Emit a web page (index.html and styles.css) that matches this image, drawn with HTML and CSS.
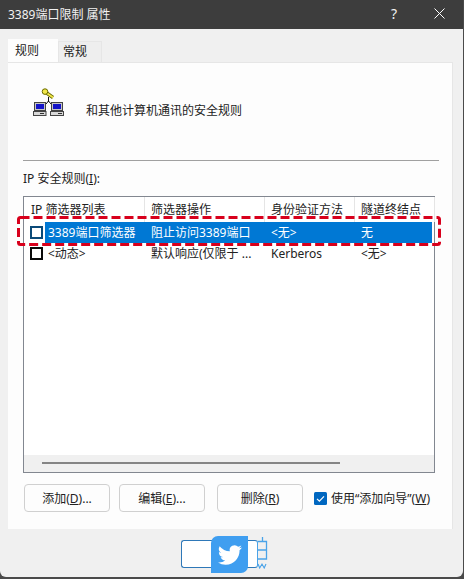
FILE: index.html
```html
<!DOCTYPE html>
<html lang="zh-CN">
<head>
    <meta charset="UTF-8">
    <meta name="viewport" content="width=device-width, initial-scale=1.0">
    <title>3389端口限制 属性</title>
    <link rel="stylesheet" href="styles.css">
</head>
<body>
    <div class="window">
        <!-- Title bar -->
        <div class="titlebar">
            <span class="title">3389端口限制 属性</span>
            <span class="help">?</span>
            <svg class="close" width="11" height="11" viewBox="0 0 11 11" aria-hidden="true">
                <path d="M0.5 0.5L10.5 10.5M10.5 0.5L0.5 10.5" stroke="#fff" stroke-width="1" fill="none"/>
            </svg>
        </div>

        <div class="content">
            <div class="tabs">
                <div class="tab tab-active">规则</div>
                <div class="tab">常规</div>
            </div>

            <div class="panel">
                <div class="intro">
                    <svg class="intro-icon" width="33" height="29" viewBox="0 0 33 29" aria-hidden="true">
                        <!-- link -->
                        <path d="M16.5 9V14M16.5 13L14 16M16.5 13L19 16" stroke="#111" stroke-width="1" fill="none"/>
                        <!-- key -->
                        <path d="M14 4.5L21 9.5" stroke="#6b6b00" stroke-width="3.4" fill="none"/>
                        <path d="M14 4.5L21 9.5" stroke="#f2e84a" stroke-width="1.6" fill="none"/>
                        <circle cx="13" cy="3.6" r="2.8" fill="#f2e84a" stroke="#6b6b00" stroke-width="1"/>
                        <!-- left computer -->
                        <rect x="2.5" y="14.5" width="11" height="8" fill="#c6c6c6" stroke="#444"/>
                        <rect x="4" y="16" width="8" height="5" fill="#1414c8"/>
                        <rect x="1.5" y="23.5" width="12.5" height="4" fill="#d8d8d8" stroke="#444"/>
                        <rect x="8" y="25" width="4" height="1" fill="#333"/>
                        <!-- right computer -->
                        <rect x="19.5" y="14.5" width="11" height="8" fill="#c6c6c6" stroke="#444"/>
                        <rect x="21" y="16" width="8" height="5" fill="#1414c8"/>
                        <rect x="18.5" y="23.5" width="13" height="4" fill="#d8d8d8" stroke="#444"/>
                        <rect x="26" y="25" width="4" height="1" fill="#333"/>
                    </svg>
                    <span class="intro-text">和其他计算机通讯的安全规则</span>
                </div>

                <div class="divider"></div>

                <div class="list-label">IP 安全规则(<u>I</u>):</div>

                <div class="list">
                    <div class="list-head">
                        <div class="col col-filter">IP 筛选器列表</div>
                        <div class="col col-action">筛选器操作</div>
                        <div class="col col-auth">身份验证方法</div>
                        <div class="col col-tunnel">隧道终结点</div>
                    </div>

                    <div class="row row-selected">
                        <span class="check"></span>
                        <div class="row-cells">
                            <div class="col col-name">3389端口筛选器</div>
                            <div class="col col-action">阻止访问3389端口</div>
                            <div class="col col-auth">&lt;无&gt;</div>
                            <div class="col col-tunnel">无</div>
                        </div>
                    </div>
                    <div class="row">
                        <span class="check"></span>
                        <div class="row-cells">
                            <div class="col col-name">&lt;动态&gt;</div>
                            <div class="col col-action">默认响应(仅限于 ...</div>
                            <div class="col col-auth">Kerberos</div>
                            <div class="col col-tunnel">&lt;无&gt;</div>
                        </div>
                    </div>

                    <div class="scrollbar"><div class="scroll-thumb"></div></div>
                </div>

                <div class="actions">
                    <button class="btn">添加(<u>D</u>)...</button>
                    <button class="btn">编辑(<u>E</u>)...</button>
                    <button class="btn btn-last">删除(<u>R</u>)</button>
                    <label class="wizard">
                        <svg class="wizard-box" width="13" height="13" viewBox="0 0 13 13" aria-hidden="true">
                            <rect width="13" height="13" rx="1.5" fill="#0067c0"/>
                            <path d="M3 6.8L5.4 9.2L10 4.4" stroke="#fff" stroke-width="1.2" fill="none"/>
                        </svg>
                        <span class="wizard-text">使用“添加向导”(<u>W</u>)</span>
                    </label>
                </div>

                <!-- Red dashed mark drawn on the screenshot -->
                <svg class="mark" width="424" height="30" viewBox="0 0 424 30" aria-hidden="true">
                    <rect x="1.5" y="1.5" width="421" height="27" rx="2" fill="none" stroke="#d8001c" stroke-width="3" stroke-dasharray="9 4"/>
                </svg>
            </div>

            <!-- Share widget stuck over the bottom of the dialog -->
            <div class="share">
                <div class="share-box"></div>
                <div class="share-bird">
                    <svg width="26" height="24" viewBox="0 0 24 24" aria-hidden="true">
                        <path fill="#fff" d="M23.95 4.57a10 10 0 0 1-2.82.77 4.96 4.96 0 0 0 2.16-2.72 9.9 9.9 0 0 1-3.12 1.18 4.92 4.92 0 0 0-8.38 4.48A13.98 13.98 0 0 1 1.64 3.16a4.92 4.92 0 0 0 1.52 6.57 4.9 4.9 0 0 1-2.23-.61v.06a4.92 4.92 0 0 0 3.95 4.83 5 5 0 0 1-2.21.08 4.94 4.94 0 0 0 4.6 3.42A9.87 9.87 0 0 1 0 19.54a13.94 13.94 0 0 0 7.55 2.21c9.05 0 14-7.5 14-13.98 0-.21 0-.42-.02-.63a9.94 9.94 0 0 0 2.46-2.55z"/>
                    </svg>
                </div>
                <svg class="share-tail" width="20" height="33" viewBox="0 0 20 33" aria-hidden="true">
                    <path d="M14.5 1V5.5M9.5 5.5H18.5V23H9.5M9.5 14H18.5" stroke="#4aa3e8" stroke-width="1.3" fill="none"/>
                    <path d="M10 28L11.7 32L14 28L16.2 32L18 28" stroke="#4aa3e8" stroke-width="1.1" fill="none"/>
                </svg>
            </div>
        </div>
    </div>
</body>
</html>
```

FILE: styles.css
```css
* {
    margin: 0;
    padding: 0;
    box-sizing: border-box;
}

body {
    width: 464px;
    height: 579px;
    overflow: hidden;
    background: #4a4a4a;
    font-family: "Noto Sans", "Noto Sans CJK SC", sans-serif;
    font-size: 12px;
    line-height: 16px;
    color: #222;
}

u {
    text-decoration: underline;
}

.window {
    width: 463px;
    height: 577px;
    display: flex;
    flex-direction: column;
    background: #f0f0f0;
    border-radius: 0 0 6px 6px;
    overflow: hidden;
}

/* title bar */
.titlebar {
    height: 29px;
    flex-shrink: 0;
    display: flex;
    align-items: center;
    padding: 0 18px 2px 8px;
    background: #3d3d3d;
    color: #f2f2f2;
}

.title {
    flex: 1;
    padding-top: 2px;
}

.help {
    font-size: 14px;
    margin-right: 37px;
}

/* tabs */
.content {
    position: relative;
    flex: 1;
    display: flex;
    flex-direction: column;
    padding: 10px 10px 0 8px;
}

.tabs {
    display: flex;
    align-items: flex-end;
    height: 23px;
}

.tab {
    height: 21px;
    width: 44px;
    padding: 2px 0 0 4px;
    background: #eeeeee;
    border: 1px solid #e6e6e6;
    border-bottom: 0;
}

.tab-active {
    height: 23px;
    width: 50px;
    padding: 4px 0 0 7px;
    background: #fdfdfd;
    border: 0;
}

/* panel */
.panel {
    position: relative;
    width: 445px;
    height: 467px;
    padding: 0 14px 0 15px;
    background: #fdfdfd;
    border-top: 1px solid #e6e6e6;
    border-right: 1px solid #e6e6e6;
}

.intro {
    height: 97px;
    display: flex;
    align-items: flex-start;
    padding: 25px 0 0 9px;
}

.intro-text {
    margin: 15px 0 0 21px;
}

.divider {
    width: 416px;
    height: 1px;
    background: #a0a0a0;
}

.list-label {
    height: 35px;
    padding-top: 10px;
}

/* rule list */
.list {
    position: relative;
    width: 412px;
    height: 277px;
    display: flex;
    flex-direction: column;
    background: #fff;
    border: 1px solid #828790;
}

.list-head {
    height: 25px;
    flex-shrink: 0;
    display: flex;
}

.list-head .col {
    height: 100%;
    padding-top: 5px;
    border-right: 1px solid #e5e5e5;
}

.col {
    flex-shrink: 0;
    white-space: nowrap;
    overflow: hidden;
}

.col-filter {
    width: 121px;
    padding-left: 7px;
}

.col-action {
    width: 120px;
    padding-left: 6px;
}

.col-auth {
    width: 90px;
    padding-left: 6px;
}

.col-tunnel {
    width: 80px;
    padding-left: 6px;
}

.row {
    height: 21px;
    flex-shrink: 0;
    display: flex;
    align-items: center;
    padding-left: 6px;
}

.check {
    width: 13px;
    height: 13px;
    flex-shrink: 0;
    border: 2px solid #0a0a0a;
    background: #fff;
}

.row-selected .check {
    border-color: #0b4a78;
}

.row-cells {
    width: 387px;
    height: 100%;
    margin-left: 2px;
    display: flex;
    align-items: center;
}

.row-selected .row-cells {
    background: #0078d4;
    color: #fff;
}

.col-name {
    width: 100px;
    padding-left: 3px;
}

.row-cells .col-tunnel {
    width: 77px;
}

.scrollbar {
    margin-top: auto;
    height: 17px;
    display: flex;
    align-items: center;
    padding: 0 0 1px 18px;
    background: #f0f0f0;
}

.scroll-thumb {
    width: 298px;
    height: 2px;
    background: #858585;
}

/* bottom row */
.actions {
    display: flex;
    align-items: center;
    margin-top: 11px;
    padding-left: 1px;
}

.btn {
    width: 86px;
    height: 28px;
    margin-right: 9px;
    padding-top: 2px;
    background: #fdfdfd;
    border: 1px solid #d0d0d0;
    border-radius: 4px;
    font: inherit;
    color: inherit;
}

.btn-last {
    margin-left: 3px;
    margin-right: 11px;
}

.wizard {
    display: flex;
    align-items: center;
    gap: 4px;
    white-space: nowrap;
}

.wizard-box {
    flex-shrink: 0;
}

.wizard-text {
    padding-top: 2px;
}

.mark {
    position: absolute;
    left: 9px;
    top: 153px;
}

/* share widget */
.share {
    position: absolute;
    left: 181px;
    top: 507px;
    display: flex;
    align-items: flex-start;
}

.share-box {
    position: absolute;
    left: 0;
    top: 4px;
    width: 77px;
    height: 28px;
    background: #fff;
    border: 1px solid #2e78b8;
    border-right-color: #4aa3e8;
    border-radius: 3px;
}

.share-bird {
    position: relative;
    width: 37px;
    height: 37px;
    margin-left: 30px;
    display: flex;
    align-items: center;
    justify-content: center;
    background: #3f9ef0;
    border-radius: 7px 0 7px 0;
}

.share-tail {
    position: relative;
}
```
